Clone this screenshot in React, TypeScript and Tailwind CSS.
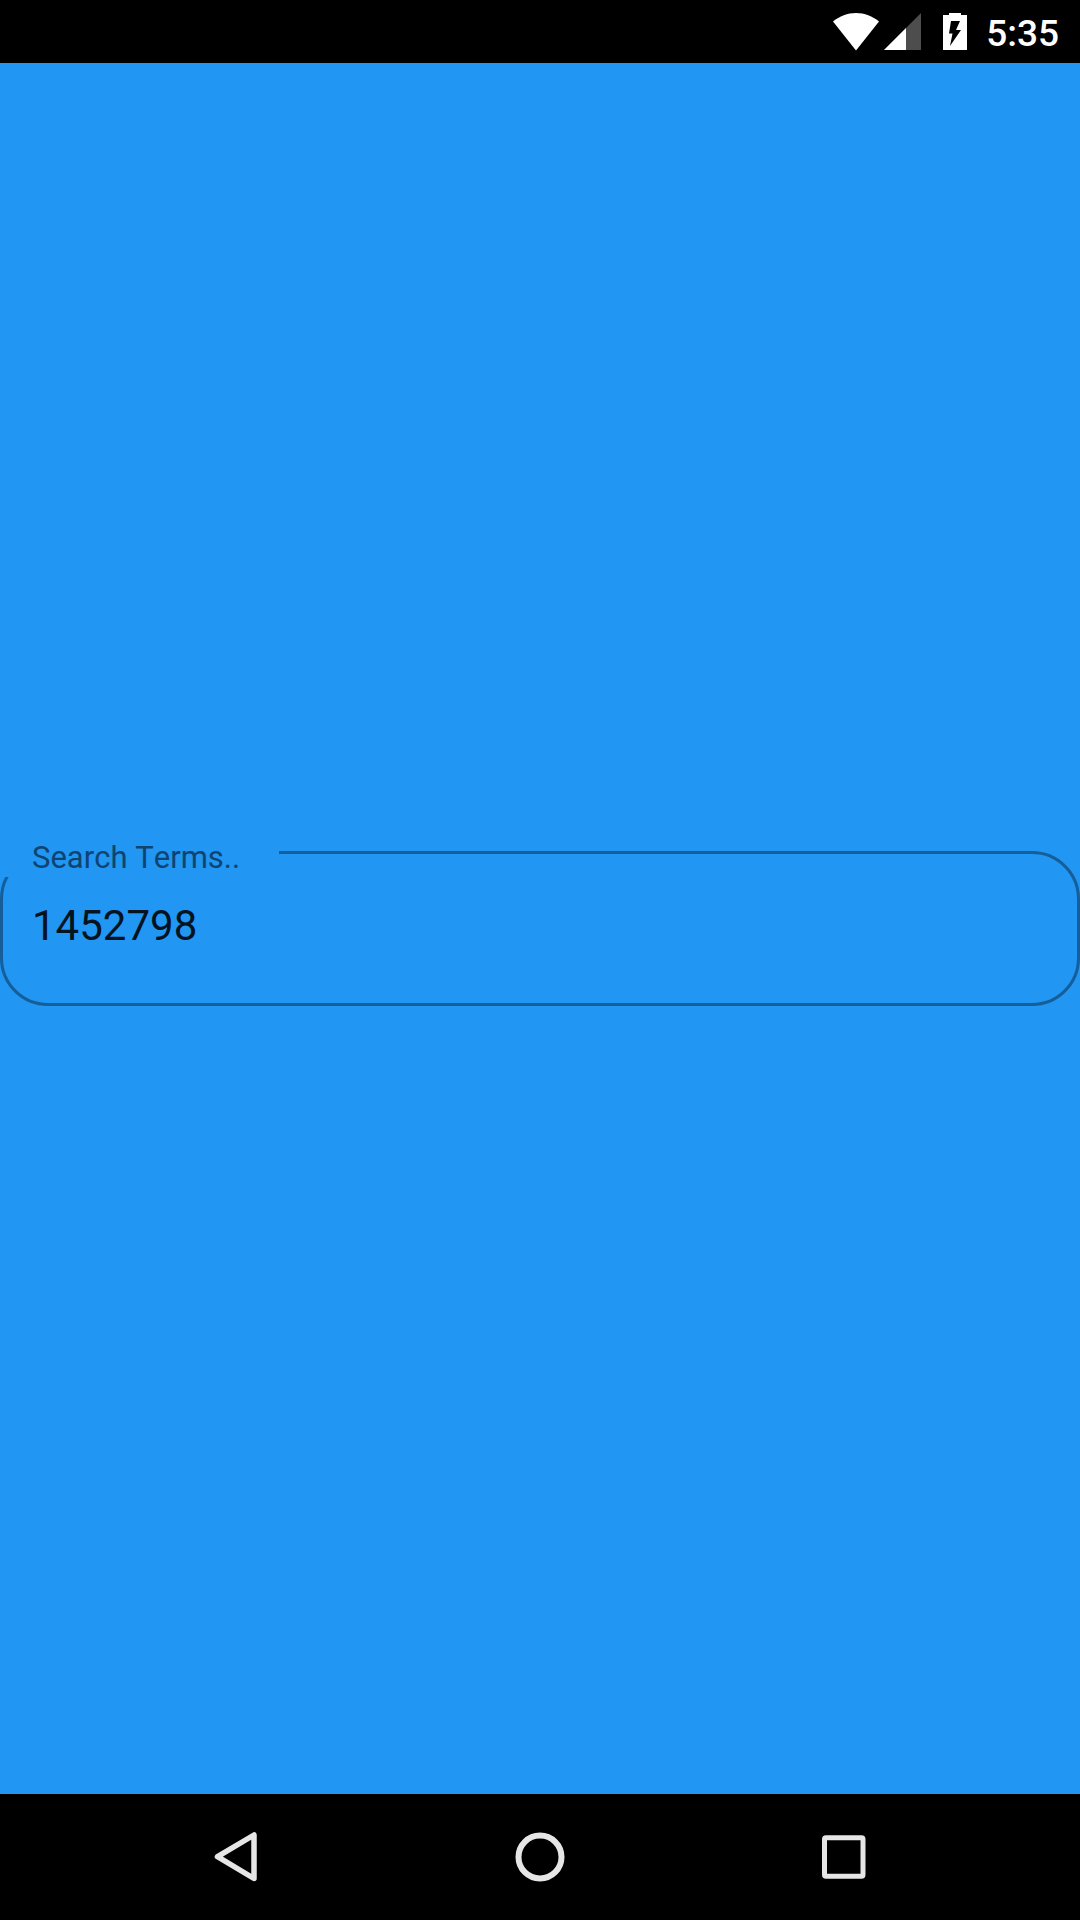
import { useState } from "react";

function StatusBar() {
  return (
    <header className="flex h-[63px] shrink-0 items-center justify-end bg-black pr-[21px] text-white">
      <svg className="mr-[5px] h-[38px] w-[46px]" viewBox="0 0 46 38" fill="currentColor" role="img" aria-label="Wi-Fi">
        <path d="M0 8.500C6.500 3.200 14.500 0 23 0s16.500 3.200 23 8.500L23 37.500z" />
      </svg>
      <svg className="mr-[22px] h-[38px] w-[37px]" viewBox="0 0 37 38" role="img" aria-label="Signal">
        <path d="M37 0v37H0z" fill="#4d4d4d" />
        <path d="M22 15v22H0z" fill="#fff" />
      </svg>
      <svg className="mr-[19px] h-[38px] w-6" viewBox="0 0 24 38" role="img" aria-label="Battery charging">
        <path d="M6 -1h12v3h6v35H0V2h6z" fill="#fff" />
        <path d="M8 8h9l-4 9h5L7 33l2.500-12.500H6z" fill="#000" />
      </svg>
      <time className="pt-1 text-[37px] leading-[43px] font-medium">5:35</time>
    </header>
  );
}

function SearchField() {
  const [value, setValue] = useState("1452798");
  return (
    <div className="relative w-full">
      <input
        id="search-terms"
        type="text"
        value={value}
        onChange={(e) => setValue(e.target.value)}
        className="block h-[155px] w-full rounded-[48px] border-3 border-[#165e99] bg-transparent px-[29px] pb-1.5 text-[42px] text-[#03131f] outline-none"
      />
      <label
        htmlFor="search-terms"
        className="absolute -top-2.5 left-0 h-9 w-[279px] bg-[#2196f3] pl-8 text-[31px] leading-[34px] whitespace-nowrap text-[#0f4470] [font-kerning:none]"
      >
        Search Terms..
      </label>
    </div>
  );
}

function NavigationBar() {
  return (
    <nav className="grid h-[126px] shrink-0 grid-cols-3 bg-black px-[84px] text-[#e6e6e6]">
      <button type="button" aria-label="Back" className="flex items-center justify-center">
        <svg className="size-[50px]" viewBox="0 0 50 50" fill="none" stroke="currentColor" strokeWidth="5.500" strokeLinejoin="round">
          <path d="M43 3v43.500L6.500 24.700z" />
        </svg>
      </button>
      <button type="button" aria-label="Home" className="flex items-center justify-center">
        <svg className="size-[50px]" viewBox="0 0 50 50" fill="none" stroke="currentColor" strokeWidth="6">
          <circle cx="25" cy="25" r="21.500" />
        </svg>
      </button>
      <button type="button" aria-label="Recent apps" className="flex items-center justify-center">
        <svg className="size-[50px]" viewBox="0 0 50 50" fill="none" stroke="currentColor" strokeWidth="5">
          <rect x="5.500" y="5.800" width="38.500" height="38.500" rx="1.500" />
        </svg>
      </button>
    </nav>
  );
}

export default function App() {
  return (
    <div className="flex min-h-screen flex-col bg-[#2196f3] font-[Roboto,sans-serif]">
      <StatusBar />
      <main className="flex flex-1 items-center">
        <SearchField />
      </main>
      <NavigationBar />
    </div>
  );
}
